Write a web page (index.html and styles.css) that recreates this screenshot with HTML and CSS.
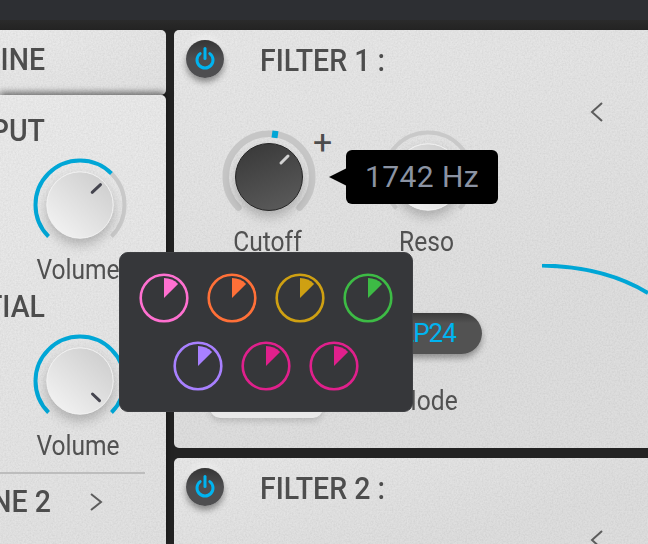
FILE: index.html
```html
<!DOCTYPE html>
<html lang="en">
<head>
<meta charset="utf-8">
<title>Filter</title>
<link rel="stylesheet" href="styles.css">
</head>
<body>
<svg class="defs" width="0" height="0" aria-hidden="true">
  <defs>
    <linearGradient id="light" x1="0.85" y1="0.1" x2="0.15" y2="0.9">
      <stop offset="0" stop-color="#cfcfcf"/><stop offset="1" stop-color="#f1f1f1"/>
    </linearGradient>
    <linearGradient id="dark" x1="0.3" y1="0" x2="0.7" y2="1">
      <stop offset="0" stop-color="#3a3a3a"/><stop offset="1" stop-color="#5a5a5a"/>
    </linearGradient>
  </defs>
</svg>
<div class="topbar"></div>
<main class="workspace">
  <aside class="sidebar">
    <div class="card card-top">
      <div class="heading">ENGINE</div>
    </div>
    <div class="card card-main">
      <section class="voice">
        <div class="heading">OUTPUT</div>
        <div class="knob-slot">
          <svg class="knob" viewBox="0 0 100 100" width="100" height="100">
            <path class="arc-grey" d="M81.47 18.53A44.5 44.5 0 0 1 81.47 81.47"/>
            <path class="arc-blue" d="M18.53 81.47A44.5 44.5 0 0 1 81.47 18.53"/>
            <circle class="cap cap-light" cx="50" cy="50" r="33.2"/>
            <path class="mark" d="M62.2 37.3L70.5 29.7"/>
          </svg>
        </div>
        <div class="label">Volume</div>
      </section>
      <section class="voice voice-next">
        <div class="heading">SPATIAL</div>
        <div class="knob-slot">
          <svg class="knob" viewBox="0 0 100 100" width="100" height="100">
            <path class="arc-blue" d="M18.53 81.47A44.5 44.5 0 1 1 81.47 81.47"/>
            <circle class="cap cap-light" cx="50" cy="50" r="33.2"/>
            <path class="mark" d="M62.5 63L69.5 69.6"/>
          </svg>
        </div>
        <div class="label">Volume</div>
      </section>
      <hr class="rule">
      <div class="engine-row">
        <div class="heading heading-wide">ENGINE 2</div>
        <svg class="chevron" viewBox="0 0 14 18" width="14" height="18"><path d="M2 1L12 9L2 17"/></svg>
      </div>
    </div>
  </aside>

  <div class="filters">
    <section class="panel panel-one">
      <header class="panel-head">
        <button class="power" type="button" aria-label="Power">
          <svg viewBox="0 0 24 24" width="24" height="24"><path d="M7.2 6.6A8 8 0 1 0 16.8 6.6"/><path d="M12 1.5V11.5"/></svg>
        </button>
        <h2 class="title">FILTER 1 :</h2>
      </header>
      <div class="panel-body">
        <div class="controls">
          <div class="control">
            <div class="knob-wrap">
              <svg class="knob" viewBox="0 0 100 100" width="100" height="100">
                <path class="ring" d="M19.42 80.58A43.25 43.25 0 1 1 80.58 80.58"/>
                <rect class="tick" x="47" y="3.5" width="6" height="7" transform="rotate(8 50 50)"/>
                <circle class="cap cap-dark" cx="50" cy="50" r="33.5"/>
                <path class="mark mark-light" d="M62 36L69 29"/>
              </svg>
              <span class="plus">+</span>
              <div class="tooltip">1742 Hz</div>
            </div>
            <div class="label">Cutoff</div>
          </div>
          <div class="control">
            <svg class="knob" viewBox="0 0 100 100" width="100" height="100">
              <path class="arc-grey" d="M18.53 81.47A44.5 44.5 0 1 1 81.47 81.47"/>
              <circle class="cap cap-light" cx="50" cy="50" r="33.2"/>
            </svg>
            <div class="label">Reso</div>
          </div>
          <div class="control">
            <div class="slot-button"></div>
          </div>
          <div class="control">
            <div class="mode-pill">LP24</div>
            <div class="label label-mode">Mode</div>
          </div>
        </div>
        <div class="graph">
          <svg class="chevron chevron-left" viewBox="0 0 14 20" width="14" height="20"><path d="M12 1L2 10L12 19"/></svg>
          <svg class="curve" viewBox="0 0 148 50" width="148" height="50"><path d="M42 1.5C75 2 115 9 148 29"/></svg>
        </div>
      </div>
    </section>
    <section class="panel panel-two">
      <header class="panel-head">
        <button class="power" type="button" aria-label="Power">
          <svg viewBox="0 0 24 24" width="24" height="24"><path d="M7.2 6.6A8 8 0 1 0 16.8 6.6"/><path d="M12 1.5V11.5"/></svg>
        </button>
        <h2 class="title">FILTER 2 :</h2>
      </header>
      <div class="graph graph-two">
        <svg class="chevron chevron-left" viewBox="0 0 14 20" width="14" height="20"><path d="M12 1L2 10L12 19"/></svg>
      </div>
    </section>
  </div>
</main>

<div class="popup">
  <div class="popup-row">
    <svg class="dial dial-pink" viewBox="0 0 50 50" width="50" height="50"><circle cx="25" cy="25" r="23.3"/><path d="M25 25V5A20 20 0 0 1 39.1 10.9Z"/></svg>
    <svg class="dial dial-orange" viewBox="0 0 50 50" width="50" height="50"><circle cx="25" cy="25" r="23.3"/><path d="M25 25V5A20 20 0 0 1 39.1 10.9Z"/></svg>
    <svg class="dial dial-gold" viewBox="0 0 50 50" width="50" height="50"><circle cx="25" cy="25" r="23.3"/><path d="M25 25V5A20 20 0 0 1 39.1 10.9Z"/></svg>
    <svg class="dial dial-green" viewBox="0 0 50 50" width="50" height="50"><circle cx="25" cy="25" r="23.3"/><path d="M25 25V5A20 20 0 0 1 39.1 10.9Z"/></svg>
  </div>
  <div class="popup-row">
    <svg class="dial dial-purple" viewBox="0 0 50 50" width="50" height="50"><circle cx="25" cy="25" r="23.3"/><path d="M25 25V5A20 20 0 0 1 39.1 10.9Z"/></svg>
    <svg class="dial dial-magenta" viewBox="0 0 50 50" width="50" height="50"><circle cx="25" cy="25" r="23.3"/><path d="M25 25V5A20 20 0 0 1 39.1 10.9Z"/></svg>
    <svg class="dial dial-magenta" viewBox="0 0 50 50" width="50" height="50"><circle cx="25" cy="25" r="23.3"/><path d="M25 25V5A20 20 0 0 1 39.1 10.9Z"/></svg>
  </div>
</div>
</body>
</html>
```
FILE: styles.css
```css
* { box-sizing: border-box; }
html, body { margin: 0; height: 100%; }
body {
  position: relative;
  width: 648px;
  height: 544px;
  overflow: hidden;
  background: #232323;
  font-family: Roboto, "Liberation Sans", sans-serif;
  color: #4d4d4d;
}
.defs { position: absolute; }
.topbar {
  height: 20px;
  background: #2d2f33;
}
.workspace {
  display: flex;
  gap: 8px;
  height: 524px;
  padding-top: 10px;
  background: linear-gradient(#2a2a2a 0, #232323 10px);
}

/* sidebar */
.sidebar { width: 166px; flex: none; display: flex; flex-direction: column; }
.card {
  background:
    url("data:image/svg+xml,%3Csvg xmlns='http://www.w3.org/2000/svg' width='240' height='240'%3E%3Cfilter id='n'%3E%3CfeTurbulence type='fractalNoise' baseFrequency='.6' numOctaves='2'/%3E%3CfeColorMatrix values='0 0 0 0 0 0 0 0 0 0 0 0 0 0 0 0 0 0 .1 -.03'/%3E%3C/filter%3E%3Crect width='240' height='240' filter='url(%23n)'/%3E%3C/svg%3E"),
    linear-gradient(160deg, #ebebeb, #e1e1e1);
  border-radius: 0 5px 5px 0;
}
.card-top { height: 65px; flex: none; padding: 0 0 5px; display: flex; align-items: center; }
.card-main {
  flex: 1;
  min-height: 0;
  padding-top: 20px;
  border-radius: 0 5px 0 0;
  box-shadow: 0 -3px 6px rgba(0, 0, 0, .5);
  position: relative;
}
.heading {
  width: 45px;
  display: flex;
  justify-content: flex-end;
  height: 30px;
  line-height: 32px;
  white-space: nowrap;
  font-size: 31px;
  font-weight: 500;
  transform: scaleX(.92);
  transform-origin: right center;
}
.card-top .heading, .engine-row .heading { line-height: 30px; }
.heading-wide { width: 51px; }
.knob-slot { width: 159px; margin-top: 10px; display: flex; justify-content: center; }
.knob-slot + .label { width: 156px; }
.voice-next { margin-top: 8px; }
.knob { display: block; overflow: visible; }
.label {
  height: 28px;
  line-height: 30px;
  font-size: 27px;
  text-align: center;
  white-space: nowrap;
  color: #515151;
  transform: scaleX(.91);
}
.rule {
  width: 145px;
  height: 2px;
  margin: 13px 0 0;
  border: 0;
  background: #bdbdbd;
}
.engine-row { display: flex; align-items: center; margin-top: 13px; gap: 38px; height: 30px; }
.chevron { display: block; flex: none; }
.chevron path { fill: none; stroke: #5c5c5c; stroke-width: 2; }

/* knob parts */
.arc-blue, .arc-grey { fill: none; stroke-width: 4; }
.arc-blue { stroke: #00a6d6; }
.arc-grey { stroke: #c9c9c9; }
.ring { fill: none; stroke: #c6c6c6; stroke-width: 6.5; stroke-linecap: round; }
.tick { fill: #00a6d6; }
.cap { filter: drop-shadow(0 6px 6px rgba(0, 0, 0, .22)); }
.cap-light { fill: url(#light); stroke: #f2f2f2; stroke-width: 1; }
.cap-dark { fill: url(#dark); stroke: #262626; stroke-width: 1; }
.mark { fill: none; stroke: #44444e; stroke-width: 3; stroke-linecap: round; }
.mark-light { stroke: #d2d2d2; }

/* filters */
.filters { flex: none; width: 500px; display: flex; flex-direction: column; gap: 10px; }
.panel {
  background:
    url("data:image/svg+xml,%3Csvg xmlns='http://www.w3.org/2000/svg' width='240' height='240'%3E%3Cfilter id='n'%3E%3CfeTurbulence type='fractalNoise' baseFrequency='.6' numOctaves='2'/%3E%3CfeColorMatrix values='0 0 0 0 0 0 0 0 0 0 0 0 0 0 0 0 0 0 .1 -.03'/%3E%3C/filter%3E%3Crect width='240' height='240' filter='url(%23n)'/%3E%3C/svg%3E"),
    linear-gradient(165deg, #e8e8e8, #dedede 70%);
  border-radius: 5px 0 0 5px;
}
.panel-one { height: 418px; flex: none; }
.panel-two { flex: 1; min-height: 0; overflow: hidden; border-radius: 5px 0 0 0; }
.panel-head { display: flex; align-items: center; gap: 36px; height: 38px; margin: 10px 0 0 12px; }
.power {
  width: 38px;
  height: 38px;
  flex: none;
  padding: 0;
  border: 0;
  border-radius: 50%;
  display: flex;
  align-items: center;
  justify-content: center;
  background: linear-gradient(#353535, #4e4e50 50%);
  box-shadow: 0 4px 6px rgba(0, 0, 0, .4), 0 -3px 6px rgba(255, 255, 255, .55);
}
.power path { fill: none; stroke: #00b4f0; stroke-width: 3; stroke-linecap: round; }
.title {
  margin: 3px 0 0;
  font-size: 31px;
  line-height: 38px;
  font-weight: 500;
  white-space: nowrap;
  color: #4d4d4d;
  transform: scaleX(.92);
  transform-origin: left center;
}
.panel-body { display: flex; }
.controls {
  flex: none;
  width: 326px;
  padding: 49px 0 0 45px;
  display: grid;
  grid-template-columns: 100px 100px;
  column-gap: 59px;
  align-content: start;
}
.control { display: flex; flex-direction: column; align-items: center; }
.control > .label { width: 97px; align-self: flex-start; }
.knob-wrap { position: relative; width: 100px; height: 100px; }
.plus {
  position: absolute;
  left: 94px;
  top: -3px;
  font-size: 34px;
  line-height: 36px;
  color: #4d4d4d;
}
.tooltip {
  position: absolute;
  left: 127px;
  top: 23px;
  width: 152px;
  height: 54px;
  border-radius: 6px;
  background: #000;
  color: #8b93a3;
  font-size: 30px;
  line-height: 54px;
  text-align: center;
  letter-spacing: .4px;
  white-space: nowrap;
  z-index: 2;
}
.tooltip::before {
  content: "";
  position: absolute;
  left: -17px;
  top: 18px;
  border: solid transparent;
  border-width: 9px 18px 9px 0;
  border-right-color: #000;
}
.slot-button {
  width: 113px;
  height: 88px;
  margin: 75px 0 0 -5px;
  flex: none;
  border-radius: 10px;
  background: #e9e9e9;
  box-shadow: 0 3px 6px rgba(0, 0, 0, .16);
}
.mode-pill {
  width: 108px;
  height: 41px;
  margin-top: 58px;
  flex: none;
  border-radius: 21px;
  background: linear-gradient(#3a3a3a, #525252 25%);
  box-shadow: 0 4px 6px rgba(0, 0, 0, .35);
  color: #00b4f0;
  font-size: 26px;
  line-height: 41px;
  letter-spacing: -1px;
  text-align: center;
}
.control > .label-mode { margin-top: 32px; }
.graph { flex: 1; display: flex; flex-direction: column; }
.chevron-left { margin: 24px 0 0 90px; }
.curve { display: block; margin-top: 142px; }
.curve path { fill: none; stroke: #00a6d6; stroke-width: 4; }
.graph-two .chevron-left { margin: 24px 0 0 416px; }

/* popup */
.popup {
  position: absolute;
  left: 119px;
  top: 252px;
  width: 294px;
  height: 160px;
  padding: 20px 0 0;
  display: flex;
  flex-direction: column;
  gap: 18px;
  border: 1px solid #3e3f42;
  border-radius: 9px;
  background: #36373a;
  z-index: 5;
}
.popup-row { display: flex; justify-content: center; gap: 18px; }
.dial { display: block; }
.dial circle { fill: none; stroke: currentColor; stroke-width: 2.6; }
.dial path { fill: currentColor; }
.dial-pink { color: #ff70d0; }
.dial-orange { color: #ff7038; }
.dial-gold { color: #cfa012; }
.dial-green { color: #3dbb45; }
.dial-purple { color: #a880ff; }
.dial-magenta { color: #e0208c; }
```
